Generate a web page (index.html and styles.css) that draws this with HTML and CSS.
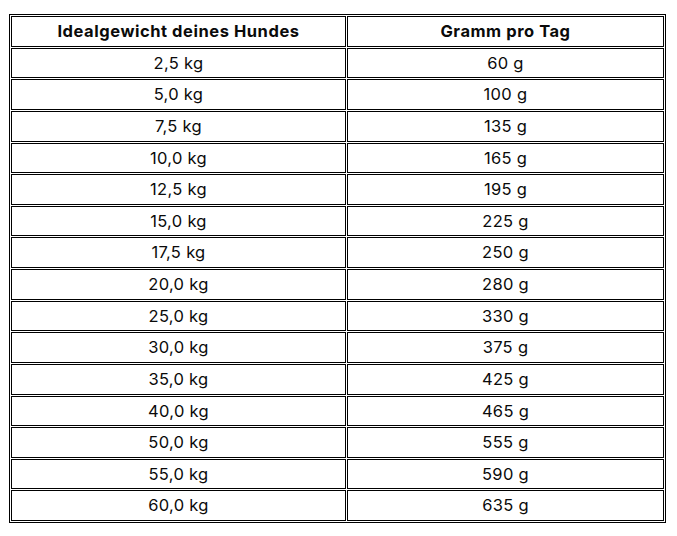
FILE: index.html
```html
<!DOCTYPE html>
<html lang="de">
<head>
<meta charset="utf-8">
<link rel="stylesheet" href="styles.css">
</head>
<body>
<table class="feed">
  <thead>
    <tr><th class="c1">Idealgewicht deines Hundes</th><th class="c2">Gramm pro Tag</th></tr>
  </thead>
  <tbody>
    <tr><td>2,5 kg</td><td>60 g</td></tr>
    <tr><td>5,0 kg</td><td>100 g</td></tr>
    <tr><td>7,5 kg</td><td>135 g</td></tr>
    <tr><td>10,0 kg</td><td>165 g</td></tr>
    <tr><td>12,5 kg</td><td>195 g</td></tr>
    <tr><td>15,0 kg</td><td>225 g</td></tr>
    <tr><td>17,5 kg</td><td>250 g</td></tr>
    <tr><td>20,0 kg</td><td>280 g</td></tr>
    <tr><td>25,0 kg</td><td>330 g</td></tr>
    <tr><td>30,0 kg</td><td>375 g</td></tr>
    <tr><td>35,0 kg</td><td>425 g</td></tr>
    <tr><td>40,0 kg</td><td>465 g</td></tr>
    <tr><td>50,0 kg</td><td>555 g</td></tr>
    <tr><td>55,0 kg</td><td>590 g</td></tr>
    <tr><td>60,0 kg</td><td>635 g</td></tr>
  </tbody>
</table>
</body>
</html>
```

FILE: styles.css
```css
html, body {
  margin: 0;
  padding: 0;
  background: #ffffff;
}

body {
  font-family: Inter, Roboto, "Liberation Sans", sans-serif;
  color: #0a0a0a;
}

.feed {
  margin: 14px 0 0 9px;
  border: 1px solid #000000;
  border-collapse: separate;
  border-spacing: 1px;
  table-layout: fixed;
  width: 657px;
}

.feed th,
.feed td {
  border: 1px solid #000000;
  padding: 1px 0 0 0;
  height: 27.625px;
  line-height: 27.625px;
  text-align: center;
  font-size: 16.5px;
  letter-spacing: 0.3px;
  white-space: nowrap;
}

.feed th {
  font-weight: 700;
  letter-spacing: 0.55px;
}

.feed td {
  font-weight: 400;
}

.feed .c1 {
  width: 333px;
}

.feed .c2 {
  width: 315px;
}
```
